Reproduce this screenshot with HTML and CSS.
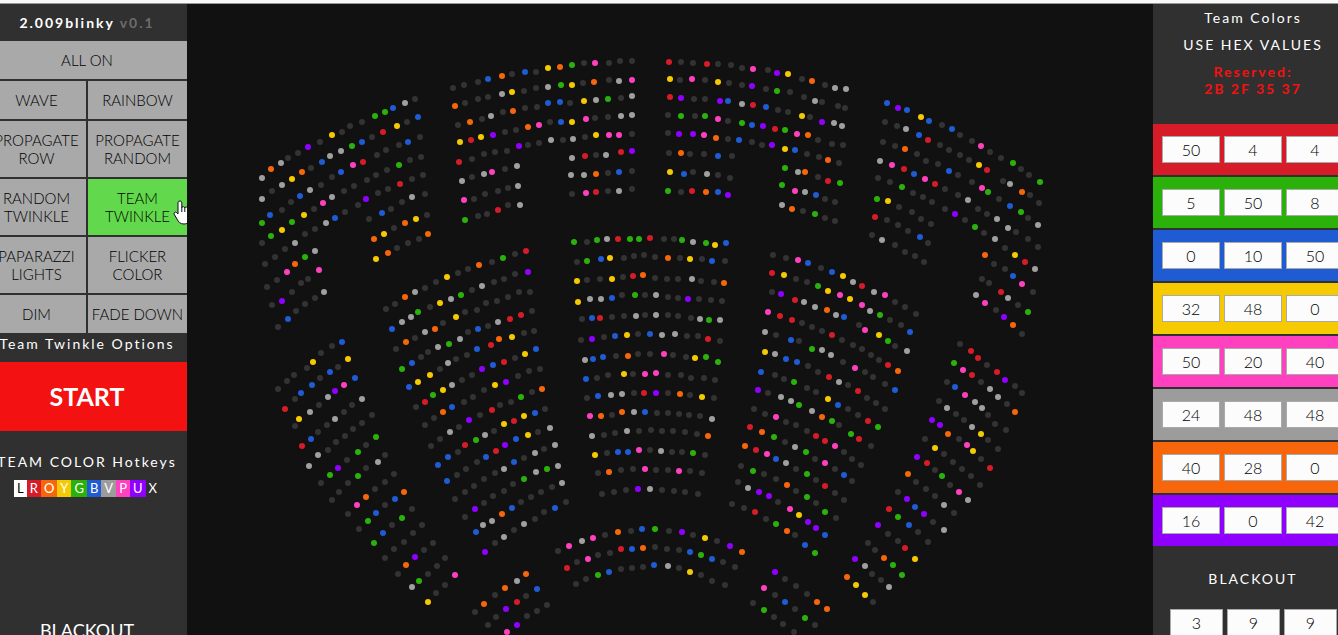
FILE: index.html
```
<!DOCTYPE html>
<html lang="en">
<head>
<meta charset="utf-8">
<meta name="viewport" content="width=device-width, initial-scale=1">
<title>2.009blinky</title>
<link rel="stylesheet" href="styles.css">
</head>
<body>
<div class="topline"></div>
<div class="app">
  <aside class="panel">
    <h1 class="brand">2.009blinky <span class="version">v0.1</span></h1>
    <div class="modes">
      <button class="mode wide" type="button">ALL ON</button>
      <button class="mode" type="button">WAVE</button>
      <button class="mode" type="button">RAINBOW</button>
      <button class="mode" type="button">PROPAGATE ROW</button>
      <button class="mode" type="button">PROPAGATE RANDOM</button>
      <button class="mode" type="button">RANDOM TWINKLE</button>
      <button class="mode active" type="button">TEAM TWINKLE
        <svg class="pointer" viewBox="0 0 18 25" aria-hidden="true"><path d="M7 1C5.300 1 5 2 5 3V14L3.500 12.500C2.500 11.500.500 12.500 1 14L4 19C5.500 22 7 24 11 24S17.500 21 17.500 17V9C17.500 7.300 15 7 14.800 8.500C14.500 6.800 12 6.500 11.800 8C11.500 6.300 9 6.300 8.800 7.500V3C8.800 2 8.500 1 7 1Z" fill="#fff" stroke="#0b0b20"/><path d="M8.800 7V12M11.800 8V12M14.800 9V12" stroke="#0b0b20" fill="none"/></svg>
      </button>
      <button class="mode" type="button">PAPARAZZI LIGHTS</button>
      <button class="mode" type="button">FLICKER COLOR</button>
      <button class="mode" type="button">DIM</button>
      <button class="mode" type="button">FADE DOWN</button>
    </div>
    <h2 class="caption options">Team Twinkle Options</h2>
    <button class="start" type="button">START</button>
    <h2 class="caption hotkeys-title">TEAM COLOR Hotkeys</h2>
    <div class="hotkeys"><span class="key white">L</span><span class="key red">R</span><span class="key orange">O</span><span class="key yellow">Y</span><span class="key green">G</span><span class="key blue">B</span><span class="key silver">V</span><span class="key pink">P</span><span class="key purple">U</span><span class="key">X</span></div>
    <button class="blackout" type="button">BLACKOUT</button>
  </aside>

  <main class="stage">
    <svg class="seats" id="seats" viewBox="0 0 966 631" preserveAspectRatio="xMidYMin meet" role="img" aria-label="Auditorium seats"></svg>
  </main>

  <aside class="panel">
    <div class="intro">
      <h2 class="caption">Team Colors</h2>
      <p class="caption">USE HEX VALUES</p>
      <p class="caption reserved">Reserved:<br>2B 2F 35 37</p>
    </div>
    <div class="teams">
      <div class="team red"><input class="value" aria-label="Red team, red" value="50"><input class="value" aria-label="Red team, green" value="4"><input class="value" aria-label="Red team, blue" value="4"></div>
      <div class="team green"><input class="value" aria-label="Green team, red" value="5"><input class="value" aria-label="Green team, green" value="50"><input class="value" aria-label="Green team, blue" value="8"></div>
      <div class="team blue"><input class="value" aria-label="Blue team, red" value="0"><input class="value" aria-label="Blue team, green" value="10"><input class="value" aria-label="Blue team, blue" value="50"></div>
      <div class="team yellow"><input class="value" aria-label="Yellow team, red" value="32"><input class="value" aria-label="Yellow team, green" value="48"><input class="value" aria-label="Yellow team, blue" value="0"></div>
      <div class="team pink"><input class="value" aria-label="Pink team, red" value="50"><input class="value" aria-label="Pink team, green" value="20"><input class="value" aria-label="Pink team, blue" value="40"></div>
      <div class="team silver"><input class="value" aria-label="Silver team, red" value="24"><input class="value" aria-label="Silver team, green" value="48"><input class="value" aria-label="Silver team, blue" value="48"></div>
      <div class="team orange"><input class="value" aria-label="Orange team, red" value="40"><input class="value" aria-label="Orange team, green" value="28"><input class="value" aria-label="Orange team, blue" value="0"></div>
      <div class="team purple"><input class="value" aria-label="Purple team, red" value="16"><input class="value" aria-label="Purple team, green" value="0"><input class="value" aria-label="Purple team, blue" value="42"></div>
    </div>
    <h2 class="caption dark-title">BLACKOUT</h2>
    <div class="dark-values"><input class="value" aria-label="Blackout, red" value="3"><input class="value" aria-label="Blackout, green" value="9"><input class="value" aria-label="Blackout, blue" value="9"></div>
  </aside>
</div>
<script src="seats.js"></script>
</body>
</html>
```
FILE: styles.css
```
* { box-sizing: border-box; }

body {
  margin: 0;
  height: 100vh;
  overflow: hidden;
  display: flex;
  flex-direction: column;
  background: #111;
  color: #fff;
  font-family: Lato, "Open Sans", sans-serif;
  font-size: 14px;
  line-height: 17px;
}

button, input { font-family: inherit; border-radius: 0; }

.topline {
  flex: none;
  height: 4px;
  background: #f7f9f8;
  border-bottom: 1px solid #999;
}

/* Both panels run slightly past the window's edges. */
.app {
  flex: 1;
  min-height: 0;
  margin: 0 -15px 0 -13px;
  display: grid;
  grid-template-columns: 200px 1fr 200px;
}

.panel {
  background: #303030;
  text-align: center;
  overflow: hidden;
}

.brand {
  margin: 0;
  padding: 10px 0;
  font-size: 14px;
  font-weight: 700;
  line-height: 17px;
  letter-spacing: 2px;
}
.version { color: #6c6c6c; }

.modes {
  display: grid;
  grid-template-columns: repeat(2, minmax(0, 1fr));
  gap: 2px;
}
.mode {
  position: relative;
  border: 0;
  padding: 10px 2px;
  background: #a9a9a9;
  color: #000;
  font-size: 15px;
  font-weight: 300;
  line-height: 18px;
}
.wide { grid-column: 1 / -1; }
.active { background: #62d84c; }
.pointer {
  position: absolute;
  right: -4px;
  top: 21px;
  width: 18px;
  height: 25px;
  z-index: 1;
}

.caption {
  margin: 0;
  font-size: 14px;
  font-weight: 700;
  line-height: 17px;
  letter-spacing: 2px;
  white-space: nowrap;
}
.options { padding: 2px 0 10px; font-weight: 400; }

.start {
  display: block;
  width: 100%;
  padding: 20px 0;
  border: 0;
  background: #f31111;
  color: #fff;
  font-size: 25px;
  font-weight: 700;
  line-height: 29px;
}

.hotkeys-title { padding-top: 22px; font-weight: 400; }
.hotkeys {
  display: flex;
  justify-content: center;
  padding-top: 10px;
  font-size: 13px;
}
.key { padding: 0 3px; }

.blackout {
  margin-top: 122px;
  padding: 0;
  border: 0;
  background: none;
  color: #fff;
  font-size: 18px;
  line-height: 22px;
}

.stage { min-width: 0; overflow: hidden; }
.seats { display: block; width: 100%; }

.intro {
  display: flex;
  flex-direction: column;
  gap: 10px;
  padding: 5px 0 27px;
}
.intro .caption { font-weight: 400; }
.intro .reserved { font-weight: 700; color: #f31111; }

.teams {
  display: grid;
  grid-template-columns: minmax(0, 1fr);
  gap: 2px;
}
.team {
  display: flex;
  gap: 4px;
  padding: 12px 9px;
}
.value {
  flex: 1;
  min-width: 0;
  height: 27px;
  padding: 0;
  border: 1px solid #a9a9a9;
  background: #fcfcfc;
  color: #000;
  text-align: center;
  font-size: 16px;
  font-weight: 300;
}
.dark-title { padding: 24px 0 22px; font-weight: 400; }
.dark-values {
  display: flex;
  gap: 4px;
  padding: 0 16px 0 17px;
}

.white { background: #fff; color: #000; }
.red { background: #d61c28; }
.green { background: #2ab20b; }
.blue { background: #1f5bd3; }
.yellow { background: #f6ca00; }
.pink { background: #ff40bf; }
.silver { background: #9c9c9c; }
.orange { background: #f8660b; }
.purple { background: #9000ff; }

.seat-k { fill: #333; }
.seat-r { fill: #d61c28; }
.seat-g { fill: #2ab20b; }
.seat-b { fill: #1f5bd3; }
.seat-y { fill: #f6ca00; }
.seat-p { fill: #ff40bf; }
.seat-v { fill: #a0a0a0; }
.seat-o { fill: #f8660b; }
.seat-u { fill: #9000ff; }
```
FILE: seats.js
```
// Each block has an origin on the stage. Seats are "x,y" in thirds of a
// stage unit, followed by the colour key (k is an unlit seat).
const blocks = [
  { x: 53, y: 36, seats: `
66,414v 93,387o 123,369v 144,354k 174,339k 204,321u 240,306k 276,285y 306,276k 330,258k 366,246k 405,228g 435,216g 459,204b 495,189v 525,177k
66,477v 96,453k 126,435v 156,417y 186,396o 213,384k 246,366b 270,348v 303,333v 336,318g 366,306b 396,291k 429,276r 471,258y 501,246k 534,231b
66,549g 90,525b 126,510k 153,486k 180,468b 210,450v 243,435k 276,411k 303,396b 339,375p 369,366r 411,345k 438,330k 477,315k 504,306b 540,291k
66,609k 93,588g 126,570y 156,546g 192,525y 222,507k 249,489p 276,471v 312,453k 342,438k 381,420k 408,405k 441,390k 477,375g 510,360k 543,351k
75,672k 105,651k 135,627k 165,609v 195,582k 225,567k 258,549v 285,534b 315,516k 354,495k 378,477u 414,459k 444,447k 480,432r 516,417k 549,405k
81,741k 111,720k 141,696p 165,672o 195,651g 225,633v 387,537k 426,519b 453,507k 486,486k 516,471v 555,462k
96,795k 126,783u 156,756k 183,729k 204,717k 237,690p 402,597o 432,582y 462,564k 495,549o 528,537y 561,525k
114,861k 144,837b 168,813k 195,792k 225,774k 252,756v 408,657y 444,639o 471,624k 504,609k 537,597k 564,582o
438,807k 465,792k 495,771o 525,756v 555,744k 588,726k
456,867b 486,846v 513,831v 534,816g 570,801k 600,789y
525,894k 555,876v 585,867o 609,849k` },
  { x: 253, y: 36, seats: `
39,144k 72,135k 114,126k 144,117b 186,108o 216,102k 255,96b 288,96k 324,84y 360,81o 396,75g 432,69k 465,69p 507,69k 540,63k 576,63k
45,198o 75,189k 114,177k 144,171k 186,162v 216,156y 252,153k 288,144k 324,141v 363,135g 396,135y 429,129k 462,126o 507,120k 537,123v 576,120p
54,255k 90,246o 126,237k 153,228v 189,216k 219,213o 255,204k 291,201k 324,189b 360,186b 390,189k 432,183y 468,180v 504,177g 543,174k 576,168v
60,306y 93,300r 123,291y 159,285u 195,276k 228,270k 264,261o 297,255p 330,246k 363,246b 396,246y 438,237p 465,234k 504,231k 543,228v 576,225v
57,366r 96,357k 132,342k 165,336k 201,333k 237,318u 264,315k 297,309k 333,300v 369,300k 399,297v 435,291k 468,285y 507,285p 537,285p 576,282k
66,423v 96,411k 132,402v 156,396p 195,387k 231,378v 396,354v 435,348r 468,345k 498,345v 543,336r 576,333u
72,480p 102,477k 135,462k 174,453k 204,444k 234,438v 393,405v 432,405v 468,402o 504,399k 537,396b 576,393k
75,540g 114,528k 141,522k 174,510r 204,495k 240,495v 396,462k 438,459p 468,456r 504,453k 537,453v 576,447k
21,711y 54,699k 84,687k 117,675o 156,666k 189,654g 225,642k 258,633r
33,777v 63,765g 96,750k 126,738v 162,726k 192,717k 225,702k 264,696u
48,831y 75,816k 111,810k 138,789k 171,783k 204,771k 237,756k 270,756k
84,876k 114,867b 144,858k 174,846v 210,837r 243,825r 276,813k
252,879k 282,873k
402,606g 441,606k 471,600g 501,597v 534,597r 570,597g 597,597g
411,666k 441,663g 483,657b 510,654y 552,654k 582,648k
411,723y 441,720k 480,717k 516,717y 549,711k 579,708r
414,786y 450,777v 483,777v 516,774b 546,765k 585,765g
426,837k 456,834b 480,834r 516,831k 552,828k 588,828v
492,891k 525,888b 561,885y 594,882k` },
  { x: 453, y: 36, seats: `
87,66r 123,66k 159,69k 201,72r 234,72k 273,75k 306,84k 339,87p 384,90k 411,99u 444,102y 486,117k 516,123o 555,135k 585,144v 618,147v
90,117y 120,120k 156,117p 195,120k 234,126y 267,129k 306,135k 336,138u 378,147k 411,153g 450,156k 492,171k 525,183v 546,186k 594,198k 615,204k
90,171r 123,174u 162,177k 195,177k 240,183u 264,183b 306,192v 339,195r 378,201b 414,210k 444,216k 486,228y 510,231k 546,246u 582,249v 606,258v
84,225k 123,228g 165,228k 195,228g 234,237p 264,243k 306,249g 336,255b 369,258u 405,267r 435,270g 471,282p 504,285o 534,300k 576,312k 609,315k
84,279k 117,282u 159,282u 192,285p 228,294o 264,297k 297,300b 336,306k 366,315k 396,315u 435,327y 465,330b 501,342k 537,351k 564,360o 597,369k
87,339k 123,339o 150,342k 192,342k 234,348b 276,348k 435,384g 474,396v 495,396o 534,411k 564,423r 600,429g
90,396y 132,402b 159,396k 201,402v 234,405k 270,414k 426,435g 465,453p 495,456v 528,465b 555,477k 585,486k
84,453g 123,456k 156,453r 198,456o 234,456b 264,465u 426,495v 456,507o 489,513k 525,522g 555,534k 585,543k
30,594r 72,597k 102,597k 126,600g 159,606v 198,609g 225,615y 258,609b
12,645k 45,651k 84,654o 120,654k 150,657y 186,657k 216,663b 255,663k
9,705o 45,714k 81,717k 114,717k 156,717v 183,723k 222,726k 252,729o
15,765k 48,765v 84,771k 114,774k 144,777u 177,777k 213,780k 246,783k
15,825k 48,825v 84,825k 114,828k 153,834k 180,837v 207,840g 240,840v
30,882b 66,885v 105,882v 141,888k 174,888k
399,645k 438,654k 474,660p 504,669b 543,684k 576,696b 609,708y
396,699r 432,705y 468,717k 501,726k 534,738g 564,753y 600,765p
396,756k 423,762u 465,780r 492,786v 525,801v 561,810o 588,825v 612,831b
384,816p 420,828r 456,840r 486,849k 516,861k 546,873k 576,885r
375,876v 408,885k` },
  { x: 653, y: 36, seats: `
141,189b 174,204u 201,210b 243,231y 267,243b 306,255k 336,267b 360,285k 396,303k 423,318p 450,336k 483,354k 519,369g 543,387k 567,405k 600,426g
135,246k 171,258k 198,267v 237,285b 264,300r 300,315k 327,330k 360,345k 387,360k 417,375y 441,390r 489,423k 510,432v 546,456o 570,465k 597,489k
129,306k 165,318k 195,327o 231,342k 258,363k 294,372k 327,393b 354,405k 396,426k 426,444p 444,456g 477,477k 510,498b 543,516g 564,534k 594,555v
120,363v 156,375p 192,387r 222,402b 255,417p 285,432r 315,447k 354,465k 384,480v 414,507k 441,522k 471,537v 504,564v 528,576k 564,597k 594,621k
114,414k 150,426k 186,441g 219,459k 249,471k 276,486k 315,507k 345,522u 375,540k 405,561g 432,579k 465,597v 495,624k 525,645y 555,666r 585,687v
111,477g 144,483y 177,501k 216,516k 243,537k 273,552k 435,645o 462,672k 495,687k 519,708b 546,732p 579,756k
105,531r 141,540k 174,555k 204,573k 240,591b 264,609k 426,717k 447,729k 483,756r 504,774v 534,795k 564,816g
96,585k 126,600v 165,615k 195,636k 225,648k 252,666k 408,765v 435,789p 468,810k 492,831u 519,855o 546,882k
39,726v 66,738r 102,756v 135,765p 165,786k 195,801k 228,822k
30,777y 66,795p 90,813v 120,825g 150,840k 183,855k 210,876b
57,855k 75,870p 117,885y` },
  { x: 53, y: 331, seats: `
306,21b 276,33k 243,54k 219,81y 201,99k 162,120k 141,138k 114,162k
324,72y 294,96k 270,111b 240,129k 216,150b 183,174b 165,192k 135,222r
345,129b 312,150p 285,168u 264,186v 237,210k 210,231v 177,252y 165,273k
366,192v 336,210k 312,231k 285,252v 261,270k 234,291k 213,312b 186,333r
396,240k 366,264k 339,282k 315,303k 288,321k 264,345k 234,360v 207,393v
408,306g 378,330k 354,351g 321,375k 294,399u 270,420g 243,444k
435,360k 414,381v 378,399k 354,423g 324,444k 297,471k 276,495k
462,417k 435,441k 405,462k 378,486o 351,510p 324,537k
492,471o 465,492b 435,510k 408,534b 384,558g 357,582k
516,522k 486,549g 456,570k 429,594b 402,624g
546,570k 519,594k 492,621k 462,642k 435,669k
579,624k 552,645k 525,666u 498,690o 474,717k
615,669k 591,693k 564,717k 537,738g 516,756v
615,750k 588,774k 564,801y
498,21o 468,42k
594,36v 564,51k 543,66k 516,84b 486,102g
600,102k 570,120y 534,141y 507,156b
609,165y 579,180g 555,201r 528,216k
609,231o 582,249k 555,270k
600,312k 573,333k
594,390b` },
  { x: 253, y: 331, seats: `
60,12v 27,27g
216,6y 177,12o 153,30r 111,42b 81,60k 48,72k 24,84v
288,42b 255,57y 225,69k 192,81r 159,90b 126,102u 96,120k 66,135k 36,150v
300,102k 267,108k 234,123k 198,141u 165,150y 132,165k 99,186k 72,201k 36,216b
306,162o 276,171k 243,186g 213,201k 180,210k 156,225r 120,240k 87,255u 57,276k 30,291v
315,222k 285,234b 252,243y 222,258r 192,267y 162,288k 135,300v 108,315g 75,330r 54,351k 24,366b
330,279v 294,291k 264,300y 228,312b 195,330u 168,348r 138,366b 111,381k 78,402k 51,420k 21,438b
345,330v 312,342k 285,354v 252,369k 222,381b 192,402v 165,414k 132,432k 102,453k 75,471k 45,492k
354,393v 321,402g 288,411v 252,432g 219,447k 192,468k 159,483k 132,504k 105,522u 75,546k
366,444v 336,456k 303,471k 273,486k 243,501k 216,519b 186,537o 156,558v 129,570v 108,591b
378,501k 345,519b 312,531k 285,552k 252,567v 222,585k 192,606v 165,624k 135,651u
45,720p
258,717o 231,738v 195,759o 165,780k 132,807o 105,831k
291,762b 258,783k 231,801r 198,822u 168,846k 144,870k
321,810k 291,828k 261,843k 231,870u 201,891p
423,15k 456,12u
435,75v 459,72b 489,66b 528,63k 564,63o 594,57k
438,132b 471,129k 504,120k 552,117y 579,117k
441,189k 474,183b 513,180v 546,177v 582,174k
450,243p 483,243o 516,240k 546,231o 582,231v
456,303v 492,300k 525,294k 561,288v 597,288k
465,360y 501,354k 534,351b 564,351b 597,345p
474,414k 507,411o 543,405k 579,402k
486,477k 522,471k 558,465k 594,462u
354,648k 387,633p 426,618v 459,609p 495,600k 534,591o 573,588k
381,699r 411,681k 444,672p 474,660k 510,654k 543,642r 576,642b
408,747k 438,732k 474,720g 507,711b 543,702k 576,699k` },
  { x: 453, y: 331, seats: `
204,12r 240,18k
30,57k 72,57p 99,60k 138,66k 165,69y 198,66g 234,81g
15,117p 48,114p 84,120k 123,120k 153,129k 192,129k 225,135k
12,174r 48,174u 84,174k 120,177o 150,180k 186,186y 222,189k
15,231b 51,234k 84,234k 117,237k 147,240k 180,243k 216,252v
33,285k 66,288k 99,288k 135,291k 171,297k 204,303o
30,345k 63,348v 96,351k 126,351k 159,354g 195,360k
15,402p 48,405k 84,405k 117,408p 150,408k 186,414k
30,462v 66,465k 102,468k 135,471k 174,477k
6,582b 45,582g 87,588k 126,591u 159,600k 195,609y 231,618k 270,633u 306,651o
9,639o 45,636k 81,642k 117,645k 150,651b 183,660g 216,672b 249,681k 285,696k
9,696k 42,690b 84,693v 117,699k 150,711y 183,720k 216,738k 255,750k
453,15b 477,18k 516,42g 546,45v 573,60v 609,81k 606,15k
375,51y 405,57v 438,72b 471,81b 504,93k 534,111k 567,126r 597,141v
363,111b 405,120k 432,132k 462,141g 501,159k 528,171k 564,192y 594,210b
354,165u 384,174k 423,186v 453,198v 477,210g 516,228v 546,246o 576,258g 597,270k
342,222k 375,237k 408,246p 438,261k 468,270k 501,288k 528,303r 555,318r 585,333p 612,351k
330,276r 366,291o 402,306g 435,321k 465,336v 498,351g 525,372k 555,384p 585,402k 612,420b
315,333o 348,345r 381,357p 408,372b 438,384v 468,402k 501,417g 528,435k 555,453r 585,474k 612,495k
303,393k 339,408g 372,417k 408,432k 441,450o 468,468k 501,486g 528,504k 555,531g 588,549k
294,441k 324,459v 357,471u 387,483u 414,501k 450,522p 477,540y 504,561u 528,579u 555,600b
276,507k 312,519k 345,531r 378,552k 408,567g 441,588o 465,600k 495,630b 525,654g
405,711u 435,732k 468,753k 501,777k 531,801o 561,822o
372,759p 405,780k 435,801b 465,822k 495,849g 525,870k
339,804k 372,825g 402,846k 429,867k 462,891k` },
  { x: 653, y: 331, seats: `
39,30k 66,42k 93,60k 117,75k 144,90r 174,108o
45,99p 75,111k 99,126k 135,147k 165,165b
24,150k 54,168r 81,189k 108,204k 135,222k
24,222k 54,240k 84,258r 114,276g
33,297g 57,312r 93,333k
36,372k 63,390k 36,438k
144,18g 165,33k 201,48v
360,27k 393,48r 414,69r 441,90k 471,111r 495,135u 525,153k 546,174k
342,84g 369,105p 396,120r 423,141k 450,162v 474,186v 501,207k 525,231o
321,141k 345,156b 375,180p 405,201v 426,219v 444,240k 465,267k 498,285k
297,198k 321,219v 348,237k 372,255k 396,276v 423,297y 444,315k 474,342k
276,255u 300,270u 324,297o 357,312k 381,330p 399,348y 423,372k 450,399r
255,312k 285,339y 312,357k 339,381k 366,402k 393,423k 420,450k
231,366u 261,384r 285,405k 306,423g 330,450k 357,471p 384,495v
204,417o 228,441k 258,462k 285,483k 312,510v 342,534k
174,471k 201,492u 225,516b 252,537u 279,561k 312,585v
147,522r 174,546g 207,570b 234,591k 264,621k
114,570u 144,597k 174,618k 195,639r 225,672y
84,624k 105,645k 132,669o 159,690g 186,720g
45,672u 75,693v 96,717k 123,735k 147,756v
21,726o 48,750y 75,780y 99,801k` }
];

const svg = document.getElementById("seats");
for (const block of blocks) {
  for (const seat of block.seats.trim().split(/\s+/)) {
    const [x, y] = seat.slice(0, -1).split(",").map(Number);
    const dot = document.createElementNS("http://www.w3.org/2000/svg", "circle");
    dot.setAttribute("cx", block.x + x / 3);
    dot.setAttribute("cy", block.y + y / 3);
    dot.setAttribute("r", 3);
    dot.setAttribute("class", "seat-" + seat.slice(-1));
    svg.append(dot);
  }
}
```
